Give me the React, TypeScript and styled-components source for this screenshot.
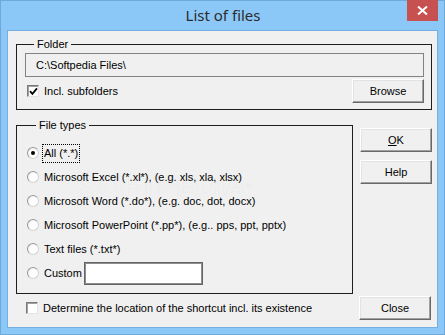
import styled, { createGlobalStyle } from "styled-components";

const GlobalStyle = createGlobalStyle`
    html, body {
        margin: 0;
        padding: 0;
        background: #8bc8f8;
    }
    * {
        box-sizing: border-box;
    }
`;

const fileTypes = [
    { id: "all", label: "All (*.*)", checked: true },
    { id: "xl", label: "Microsoft Excel (*.xl*), (e.g. xls, xla, xlsx)" },
    { id: "do", label: "Microsoft Word (*.do*), (e.g. doc, dot, docx)" },
    { id: "pp", label: "Microsoft PowerPoint (*.pp*), (e.g.. pps, ppt, pptx)" },
    { id: "txt", label: "Text files (*.txt*)" },
];

const App = () => {
    return (
        <>
            <GlobalStyle />
            <Window>
                <TitleBar>
                    <span />
                    <Title>List of files</Title>
                    <CloseX>
                        <svg width="11" height="9" viewBox="0 0 11 9">
                            <path d="M1 0.5 L10 8.5 M10 0.5 L1 8.5" stroke="#fff" strokeWidth="2" />
                        </svg>
                    </CloseX>
                </TitleBar>
                <Client>
                    <Group>
                        <Legend>Folder</Legend>
                        <PathField>C:\Softpedia Files\</PathField>
                        <FolderRow>
                            <CheckRow>
                                <CheckBox checked />
                                <span>Incl. subfolders</span>
                            </CheckRow>
                            <Button>Browse</Button>
                        </FolderRow>
                    </Group>

                    <MiddleRow>
                        <TypesGroup>
                            <Legend>File types</Legend>
                            {/* faint site watermark that sits over the list */}
                            <Watermark>
                                SOFTPEDIA<sup>®</sup>
                            </Watermark>
                            {fileTypes.map((t) => (
                                <RadioRow key={t.id}>
                                    <Radio checked={!!t.checked} />
                                    <RadioLabel focused={!!t.checked}>{t.label}</RadioLabel>
                                </RadioRow>
                            ))}
                            <RadioRow>
                                <Radio checked={false} />
                                <RadioLabel focused={false}>Custom</RadioLabel>
                                <CustomField />
                            </RadioRow>
                        </TypesGroup>
                        <ButtonColumn>
                            <Button>
                                <u>O</u>K
                            </Button>
                            <Button>Help</Button>
                        </ButtonColumn>
                    </MiddleRow>

                    <BottomRow>
                        <CheckRow>
                            <CheckBox checked={false} />
                            <span>Determine the location of the shortcut incl. its existence</span>
                        </CheckRow>
                        <Button>Close</Button>
                    </BottomRow>
                </Client>
            </Window>
        </>
    );
};

const CheckBox = ({ checked }: { checked: boolean }) => (
    <CheckBoxBox>
        {checked && (
            <svg width="9" height="9" viewBox="0 0 9 9">
                <path d="M1 4.2 L3.4 6.8 L8 1.4" stroke="#000" strokeWidth="1.8" fill="none" />
            </svg>
        )}
    </CheckBoxBox>
);

const Window = styled.div`
    width: 445px;
    height: 335px;
    display: flex;
    flex-direction: column;
    background: #8bc8f8;
    box-shadow: inset 0 0 0 1px #6fa9dc;
`;

const TitleBar = styled.div`
    height: 31px;
    display: grid;
    grid-template-columns: 1fr auto 1fr;
    align-items: start;
    padding: 0 7px 0 8px;
`;

const Title = styled.div`
    font-family: "Noto Sans", "Open Sans", sans-serif;
    font-size: 15px;
    line-height: 20px;
    margin-top: 5px;
    color: #2b2b2b;
`;

const CloseX = styled.div`
    justify-self: end;
    width: 31px;
    height: 21px;
    background: #c75050;
    display: flex;
    align-items: center;
    justify-content: center;
`;

const Client = styled.div`
    flex: 1;
    margin: 0 8px 8px 8px;
    background: #f0f0f0;
    box-shadow: 0 0 0 1px #74aee2;
    padding: 7px 5px 0 8px;
    display: flex;
    flex-direction: column;
    font-family: "Liberation Sans", Arial, sans-serif;
    font-size: 11px;
    color: #000;
`;

const Group = styled.fieldset`
    margin: 0;
    border: 1px solid #1e1e1e;
    padding: 2px 7px 6px 8px;
    min-width: 0;
    position: relative;
`;

const Legend = styled.legend`
    padding: 0 3px;
    margin-left: 9px;
    line-height: 13px;
`;

const PathField = styled.div`
    height: 24px;
    border: 1px solid #828282;
    background: #f0f0f0;
    display: flex;
    align-items: center;
    padding-left: 10px;
`;

const FolderRow = styled.div`
    display: flex;
    justify-content: space-between;
    align-items: center;
    margin-top: 2px;
    padding-left: 2px;
`;

const CheckRow = styled.label`
    display: flex;
    align-items: center;
    gap: 5px;
`;

const CheckBoxBox = styled.span`
    width: 12px;
    height: 12px;
    background: #fff;
    border: 1px solid;
    border-color: #7a7a7a #e3e3e3 #e3e3e3 #7a7a7a;
    box-shadow: inset 1px 1px 0 #a0a0a0;
    display: flex;
    align-items: center;
    justify-content: center;
`;

const Button = styled.button`
    width: 72px;
    height: 24px;
    font: inherit;
    color: #000;
    background: #f0f0f0;
    border: 1px solid;
    border-color: #fff #696969 #696969 #fff;
    box-shadow: inset -1px -1px 0 #a0a0a0, inset 1px 1px 0 #e3e3e3;
    padding: 0;
`;

const MiddleRow = styled.div`
    display: flex;
    gap: 7px;
    margin-top: 9px;
`;

const TypesGroup = styled(Group)`
    width: 337px;
    padding: 9px 7px 8px 10px;
`;

const ButtonColumn = styled.div`
    display: flex;
    flex-direction: column;
    gap: 8px;
    margin-top: 9px;
`;

const RadioRow = styled.div`
    height: 24px;
    display: flex;
    align-items: center;
    position: relative;
    z-index: 1;
`;

const Radio = styled.span<{ checked: boolean }>`
    width: 12px;
    height: 12px;
    border-radius: 50%;
    background: radial-gradient(circle at 60% 60%, #fff 40%, #e6e6e6 100%);
    border: 1px solid #9a9a9a;
    border-right-color: #d4d4d4;
    border-bottom-color: #d4d4d4;
    display: flex;
    align-items: center;
    justify-content: center;
    flex: none;
    &::after {
        content: "";
        width: 4px;
        height: 4px;
        border-radius: 50%;
        background: ${(p) => (p.checked ? "#000" : "transparent")};
    }
`;

const RadioLabel = styled.span<{ focused: boolean }>`
    margin-left: 3px;
    padding: 1px 1px;
    border: 1px dotted ${(p) => (p.focused ? "#000" : "transparent")};
    line-height: 15px;
`;

const CustomField = styled.div`
    width: 119px;
    height: 23px;
    margin-left: 0;
    background: #fff;
    border: 1px solid #646464;
    box-shadow: inset 0 0 0 1px #8e8e8e;
`;

const Watermark = styled.div`
    position: absolute;
    left: 63px;
    top: 40px;
    font-family: "Liberation Sans", Arial, sans-serif;
    font-weight: bold;
    font-size: 29px;
    line-height: 29px;
    letter-spacing: 0;
    color: rgba(255, 255, 255, 0.6);
    text-shadow: 0 0 1px rgba(170, 170, 170, 0.3);
    pointer-events: none;
    sup {
        font-size: 8px;
        vertical-align: top;
    }
`;

const BottomRow = styled.div`
    display: flex;
    justify-content: space-between;
    align-items: center;
    height: 26px;
    padding-left: 10px;
    padding-right: 1px;
    margin-top: 1px;
`;

export default App;
